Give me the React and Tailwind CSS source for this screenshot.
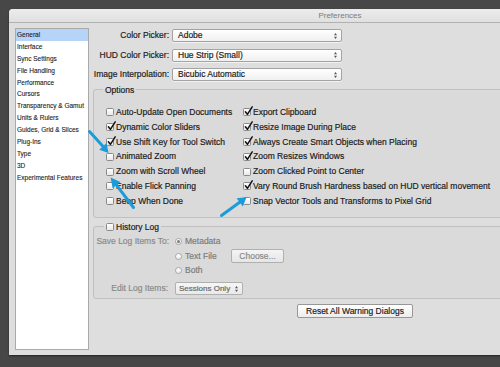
import React from "react";

function Check({ checked }) {
  return (
    <span className="relative inline-block w-[8px] h-[8px] shrink-0 border border-[#8a8a8a] rounded-[1.5px] bg-linear-to-b from-white to-[#e9e9e9]">
      {checked && (
        <svg className="absolute left-[0px] top-[-3px] w-[9px] h-[10px] overflow-visible" viewBox="0 0 9 10">
          <path d="M1.4 5.8 L3.4 8.3 L8.2 0.8" fill="none" stroke="#111" strokeWidth="1.5" strokeLinecap="round" strokeLinejoin="round" />
        </svg>
      )}
    </span>
  );
}

function Radio({ on }) {
  return (
    <span className="flex items-center justify-center w-[7px] h-[7px] shrink-0 rounded-full border border-[#a8a8a8] bg-linear-to-b from-white to-[#ececec]">
      {on && <span className="w-[3px] h-[3px] rounded-full bg-[#7a7a7a]" />}
    </span>
  );
}

function Arrows() {
  return (
    <svg width="5" height="8" viewBox="0 0 5 8" className="shrink-0">
      <path d="M2.5 1 L4 3.2 L1 3.2 Z" fill="#555" />
      <path d="M2.5 7 L4 4.8 L1 4.8 Z" fill="#555" />
    </svg>
  );
}

function Row({ checked, label }) {
  return (
    <div className="flex items-center h-[14.8px] gap-[2px] whitespace-nowrap">
      <Check checked={checked} />
      <span>{label}</span>
    </div>
  );
}

const left = [
  [false, "Auto-Update Open Documents"],
  [true, "Dynamic Color Sliders"],
  [true, "Use Shift Key for Tool Switch"],
  [false, "Animated Zoom"],
  [false, "Zoom with Scroll Wheel"],
  [false, "Enable Flick Panning"],
  [false, "Beep When Done"],
];
const right = [
  [true, "Export Clipboard"],
  [true, "Resize Image During Place"],
  [true, "Always Create Smart Objects when Placing"],
  [true, "Zoom Resizes Windows"],
  [false, "Zoom Clicked Point to Center"],
  [true, "Vary Round Brush Hardness based on HUD vertical movement"],
  [false, "Snap Vector Tools and Transforms to Pixel Grid"],
];

const sidebar = [
  "General",
  "Interface",
  "Sync Settings",
  "File Handling",
  "Performance",
  "Cursors",
  "Transparency & Gamut",
  "Units & Rulers",
  "Guides, Grid & Slices",
  "Plug-Ins",
  "Type",
  "3D",
  "Experimental Features",
];

export default function App() {
  return (
    <div className="relative w-[500px] h-[367px] overflow-hidden bg-[#474747] pt-[9px] pl-[9px] font-['Liberation_Sans',Arial,sans-serif] text-[#1b1b1b]">
      <div className="w-[662px] h-[346px] bg-[#dedede] rounded-t-[4px] flex flex-col shadow-[0_1px_2px_rgba(0,0,0,0.5)]">
        <div className="h-[14px] border-b border-[#b2b2b2] bg-linear-to-b from-[#ececec] to-[#e0e0e0] rounded-t-[4px] text-center text-[8px] leading-[13px] text-[#7b7b7b]">
          Preferences
        </div>
        <div className="flex flex-1">
          <div className="ml-[6px] mt-[5px] mb-[5px] w-[74px] bg-white border border-[#aaaaaa] text-[6.5px] text-[#222] [-webkit-text-stroke:0.1px_currentColor]">
            {sidebar.map((s, i) => (
              <div
                key={s}
                className={
                  i === 0
                    ? "h-[11.9px] leading-[11.9px] pl-[1px] bg-[#b6d4f7] whitespace-nowrap"
                    : "h-[11.9px] leading-[11.9px] pl-[1px] whitespace-nowrap"
                }
              >
                {s}
              </div>
            ))}
          </div>
          <div className="ml-[4px] w-[524px] flex flex-col text-[8.5px] [-webkit-text-stroke:0.18px_currentColor]">
            <div className="flex flex-col pt-[6px] gap-[6.5px]">
              {[
                ["Color Picker:", "Adobe"],
                ["HUD Color Picker:", "Hue Strip (Small)"],
                ["Image Interpolation:", "Bicubic Automatic"],
              ].map(([l, v]) => (
                <div key={l} className="flex items-center h-[13px]">
                  <span className="w-[76px] text-right whitespace-nowrap">{l}</span>
                  <div className="ml-[3px] w-[170px] h-[13px] flex items-center justify-between border border-[#a3a3a3] rounded-[2px] bg-linear-to-b from-white to-[#f0f0f0] pl-[5px] pr-[3px] shadow-[0_1px_0_rgba(255,255,255,0.6)]">
                    <span className="whitespace-nowrap">{v}</span>
                    <Arrows />
                  </div>
                </div>
              ))}
            </div>

            <fieldset className="mt-[3.5px] border border-[#c0c0c0] rounded-[3px] bg-[#dadada]">
              <legend className="ml-[9px] px-[2px] leading-[10px]">Options</legend>
              <div className="flex pl-[12px] pt-[10.5px] pb-[8px]">
                <div className="w-[137px] flex flex-col">
                  {left.map(([c, l]) => (
                    <Row key={l} checked={c} label={l} />
                  ))}
                </div>
                <div className="flex flex-col">
                  {right.map(([c, l]) => (
                    <Row key={l} checked={c} label={l} />
                  ))}
                </div>
              </div>
            </fieldset>

            <fieldset className="mt-[4px] border border-[#c0c0c0] rounded-[3px] bg-[#dadada]">
              <legend className="ml-[10px] px-[2px] leading-[10px]">
                <span className="flex items-center gap-[2px]">
                  <Check checked={false} />
                  <span>History Log</span>
                </span>
              </legend>
              <div className="flex flex-col pt-[3px] pb-[3px] text-[#8a8a8a]">
                <div className="flex items-center h-[14.5px]">
                  <span className="w-[75px] text-right whitespace-nowrap">Save Log Items To:</span>
                  <div className="ml-[6px] flex items-center gap-[3px]">
                    <Radio on />
                    <span className="text-[#7a7a7a]">Metadata</span>
                  </div>
                </div>
                <div className="flex items-center h-[14.5px]">
                  <span className="w-[75px]" />
                  <div className="ml-[6px] w-[56px] flex items-center gap-[3px]">
                    <Radio />
                    <span className="text-[#7a7a7a] whitespace-nowrap">Text File</span>
                  </div>
                  <div className="w-[53px] h-[14px] flex items-center justify-center border border-[#b0b0b0] rounded-[2px] bg-linear-to-b from-[#f4f4f4] to-[#e6e6e6] text-[#8a8a8a]">
                    Choose...
                  </div>
                </div>
                <div className="flex items-center h-[14.5px]">
                  <span className="w-[75px]" />
                  <div className="ml-[6px] flex items-center gap-[3px]">
                    <Radio />
                    <span className="text-[#7a7a7a]">Both</span>
                  </div>
                </div>
                <div className="flex items-center h-[13px] mt-[4px]">
                  <span className="w-[74px] text-right whitespace-nowrap">Edit Log Items:</span>
                  <div className="ml-[7px] w-[68px] h-[13px] flex items-center justify-between border border-[#b0b0b0] rounded-[2px] bg-linear-to-b from-[#f6f6f6] to-[#e9e9e9] pl-[3px] pr-[3px] text-[#666]">
                    <span className="whitespace-nowrap text-[8px]">Sessions Only</span>
                    <Arrows />
                  </div>
                </div>
              </div>
            </fieldset>

            <div className="mt-[5px] self-center w-[116px] h-[14px] flex items-center justify-center border border-[#979797] rounded-[2px] bg-linear-to-b from-white to-[#ededed] whitespace-nowrap">
              Reset All Warning Dialogs
            </div>
          </div>
        </div>
      </div>

      <svg className="absolute left-0 top-0 pointer-events-none" width="500" height="367" viewBox="0 0 500 367">
        <g stroke="#1c9bd9" strokeWidth="3" strokeLinecap="round" fill="#1c9bd9">
          <line x1="89.5" y1="131.5" x2="102.9" y2="146.3" />
          <line x1="133.5" y1="207.5" x2="116.5" y2="185.1" />
          <line x1="221.5" y1="215.5" x2="239.7" y2="202.3" />
        </g>
        <g fill="#1c9bd9">
          <polygon points="108.5,153 99.2,149.8 106.6,142.9" />
          <polygon points="110.6,177.4 120.4,182 112.6,188.2" />
          <polygon points="246.5,197.2 242.8,206.4 236.6,198.3" />
        </g>
      </svg>
    </div>
  );
}
